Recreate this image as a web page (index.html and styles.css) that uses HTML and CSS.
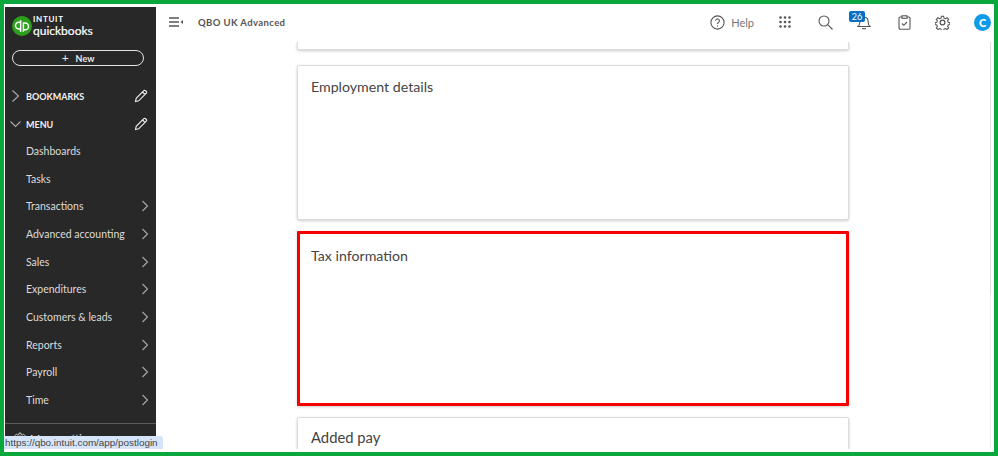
FILE: index.html
```html
<!DOCTYPE html>
<html lang="en">
<head>
<meta charset="utf-8">
<title>QBO UK Advanced</title>
<link rel="stylesheet" href="styles.css">
</head>
<body>
<div class="frame">
  <aside class="sidebar">
    <div class="logo">
      <svg class="logo-mark" width="20" height="20" viewBox="0 0 20 20"><circle cx="10" cy="10" r="10" fill="#2ca01c"/><path d="M8.600 6.200H6.900a3.400 3.400 0 0 0 0 6.800H8.600V4.200M8.600 6.200V16M11.400 15.800V6.200M11.400 7H13.100a3.400 3.400 0 0 1 0 6.800H11.400" fill="none" stroke="#fff" stroke-width="1.500"/></svg>
      <div class="logo-text"><span class="intuit">INTUIT</span><span class="qb">quickbooks</span></div>
    </div>
    <button class="new-btn"><span class="plus">+</span><span>New</span></button>
    <div class="section section-first">
      <svg class="chev" width="11" height="14" viewBox="0 0 11 14"><path d="M2.500 1.500 8.500 7 2.500 12.500"/></svg>
      <span class="section-label">BOOKMARKS</span>
      <svg class="pencil" width="14" height="14" viewBox="0 0 14 14"><path d="M1.500 12.500 2.200 9.300 9.800 1.700a1.200 1.200 0 0 1 1.700 0l.8.8a1.200 1.200 0 0 1 0 1.700L4.700 11.800Z M8.500 3 11 5.500"/></svg>
    </div>
    <div class="section">
      <svg class="chev" width="11" height="8" viewBox="0 0 11 8"><path d="M.5 1.500 5.500 6.500 10.500 1.500"/></svg>
      <span class="section-label">MENU</span>
      <svg class="pencil" width="14" height="14" viewBox="0 0 14 14"><path d="M1.500 12.500 2.200 9.300 9.800 1.700a1.200 1.200 0 0 1 1.700 0l.8.8a1.200 1.200 0 0 1 0 1.700L4.700 11.800Z M8.500 3 11 5.500"/></svg>
    </div>
    <nav class="menu">
      <div class="item"><span>Dashboards</span></div>
      <div class="item"><span>Tasks</span></div>
      <div class="item"><span>Transactions</span><svg class="chev" width="8" height="12" viewBox="0 0 8 12"><path d="M1.500 1 6.500 6 1.500 11"/></svg></div>
      <div class="item"><span>Advanced accounting</span><svg class="chev" width="8" height="12" viewBox="0 0 8 12"><path d="M1.500 1 6.500 6 1.500 11"/></svg></div>
      <div class="item"><span>Sales</span><svg class="chev" width="8" height="12" viewBox="0 0 8 12"><path d="M1.500 1 6.500 6 1.500 11"/></svg></div>
      <div class="item"><span>Expenditures</span><svg class="chev" width="8" height="12" viewBox="0 0 8 12"><path d="M1.500 1 6.500 6 1.500 11"/></svg></div>
      <div class="item"><span>Customers &amp; leads</span><svg class="chev" width="8" height="12" viewBox="0 0 8 12"><path d="M1.500 1 6.500 6 1.500 11"/></svg></div>
      <div class="item"><span>Reports</span><svg class="chev" width="8" height="12" viewBox="0 0 8 12"><path d="M1.500 1 6.500 6 1.500 11"/></svg></div>
      <div class="item"><span>Payroll</span><svg class="chev" width="8" height="12" viewBox="0 0 8 12"><path d="M1.500 1 6.500 6 1.500 11"/></svg></div>
      <div class="item"><span>Time</span><svg class="chev" width="8" height="12" viewBox="0 0 8 12"><path d="M1.500 1 6.500 6 1.500 11"/></svg></div>
    </nav>
    <div class="side-foot">
      <svg class="foot-gear" width="12" height="12" viewBox="0 0 24 24"><path d="M12 8a4 4 0 1 0 0 8 4 4 0 0 0 0-8Z"/><path d="M10 1h4l.7 3.300 2.500 1 2.900-1.800 2.800 2.800-1.800 2.900 1 2.500 3 .7v3.200l-3 .7-1 2.500 1.800 2.900-2.800 2.800-2.900-1.800-2.500 1-.7 3h-4l-.7-3-2.500-1-2.900 1.800-2.800-2.800 1.800-2.900-1-2.500-3-.7v-3.200l3-.7 1-2.500-1.800-2.900 2.800-2.800 2.900 1.800 2.500-1Z" transform="translate(1.200 1.200) scale(.9)"/></svg>
      <span>Menu settings</span>
    </div>
  </aside>
  <main class="main">
    <header class="topbar">
      <svg class="menu-toggle" width="14" height="10" viewBox="0 0 14 10"><path d="M0 1H10M0 5H10M0 9H10" stroke="#555" stroke-width="1.300" fill="none"/><path d="M14 3 11.500 5 14 7Z" fill="#555"/></svg>
      <span class="company">QBO UK Advanced</span>
      <div class="tools">
        <div class="help">
          <svg class="tool" width="15" height="15" viewBox="0 0 15 15"><circle cx="7.500" cy="7.500" r="6.600"/><path d="M5.600 5.800a1.900 1.900 0 1 1 2.900 1.600c-.7.400-1 .8-1 1.500"/><path d="M7.500 10.400v1.100"/></svg>
          <span>Help</span>
        </div>
        <svg class="grid-icon" width="12" height="12" viewBox="0 0 12 12" fill="#555"><circle cx="1.500" cy="1.500" r="1.300"/><circle cx="6" cy="1.500" r="1.300"/><circle cx="10.500" cy="1.500" r="1.300"/><circle cx="1.500" cy="6" r="1.300"/><circle cx="6" cy="6" r="1.300"/><circle cx="10.500" cy="6" r="1.300"/><circle cx="1.500" cy="10.500" r="1.300"/><circle cx="6" cy="10.500" r="1.300"/><circle cx="10.500" cy="10.500" r="1.300"/></svg>
        <svg class="tool search" width="15" height="15" viewBox="0 0 15 15"><circle cx="6" cy="6" r="5"/><path d="M9.700 9.700 14.500 14.500"/></svg>
        <div class="bell">
          <svg class="tool" width="14" height="16" viewBox="0 0 14 16"><path d="M1 12.500c1.500-1 1.800-2.500 1.800-4.500 0-2.800 1.700-4.800 4.200-4.800s4.200 2 4.200 4.800c0 2 .3 3.500 1.800 4.500Z"/><path d="M5 14.700h4"/></svg>
          <span class="badge">26</span>
        </div>
        <svg class="tool clip" width="13" height="15" viewBox="0 0 13 15"><rect x="1" y="2" width="11" height="12.300" rx="1.200"/><rect x="4" y=".8" width="5" height="2.500" fill="#fff"/><path d="M4 8.500 5.800 10.300 9 7"/></svg>
        <svg class="tool gear" width="15" height="15" viewBox="0 0 24 24"><circle cx="12" cy="12" r="3.800"/><path d="M10 1h4l.7 3.300 2.500 1 2.900-1.800 2.800 2.800-1.800 2.900 1 2.500 3 .7v3.200l-3 .7-1 2.500 1.800 2.900-2.800 2.800-2.900-1.800-2.500 1-.7 3h-4l-.7-3-2.500-1-2.900 1.800-2.800-2.800 1.800-2.900-1-2.500-3-.7v-3.200l3-.7 1-2.500-1.800-2.900 2.800-2.800 2.900 1.800 2.500-1Z" transform="translate(1.200 1.200) scale(.9)"/></svg>
        <span class="avatar">C</span>
      </div>
    </header>
    <div class="content">
      <section class="card card-top"></section>
      <section class="card card-emp"><h2>Employment details</h2></section>
      <section class="card card-tax"><h2>Tax information</h2></section>
      <section class="card card-pay"><h2>Added pay</h2><p class="sub">Bonus &amp; commission</p></section>
    </div>
    <div class="scrollbar"><div class="thumb"></div></div>
  </main>
  <div class="status">https://qbo.intuit.com/app/postlogin</div>
</div>
</body>
</html>
```

FILE: styles.css
```css
* { box-sizing: border-box; }
html, body { margin: 0; height: 100%; background: #fff; overflow: hidden; }
body { font-family: "Lato", "Open Sans", sans-serif; }
.frame {
  position: relative;
  width: 998px;
  height: 456px;
  border: 4px solid #0aa83c;
  padding: 3px 0 3px 1px;
  display: flex;
  overflow: hidden;
  background: #fff;
}
.sidebar {
  width: 151px;
  flex: none;
  background: #282828;
  color: #e6e6e6;
  overflow: hidden;
  display: flex;
  flex-direction: column;
  font-size: 11px;
}
.logo { display: flex; align-items: center; gap: 1px; padding: 0 0 0 7px; height: 38px; flex: none; }
.logo-mark { flex: none; }
.logo-text { display: flex; flex-direction: column; color: #fff; }
.intuit { font-size: 8px; font-weight: 700; letter-spacing: .7px; line-height: 9px; }
.qb { font-size: 12px; font-weight: 400; -webkit-text-stroke: .2px #fff; line-height: 13px; }
.new-btn {
  margin: 5px 0 0 7px;
  width: 132px;
  height: 16px;
  flex: none;
  border: 1px solid #e4e4e4;
  border-radius: 8px;
  background: transparent;
  color: #e8e8e8;
  font: 700 9px "Lato", sans-serif;
  display: flex;
  align-items: center;
  justify-content: center;
  gap: 7px;
  padding: 0;
}
.plus { font-size: 12px; font-weight: 400; line-height: 12px; }
.section { display: flex; align-items: center; height: 28px; padding-right: 8px; position: relative; flex: none; }
.section-first { margin-top: 16px; }
.section-label { position: absolute; left: 21px; font-size: 9px; font-weight: 700; color: #f0f0f0; }
.section .chev { margin-left: 5px; }
.pencil { margin-left: auto; fill: none; stroke: #f0f0f0; stroke-width: 1.100; }
.chev { fill: none; stroke: #aaa; stroke-width: 1.100; flex: none; }
.menu { display: flex; flex-direction: column; flex: none; margin-top: -1px; }
.item { height: 27.700px; display: flex; align-items: center; justify-content: space-between; padding: 0 7px 0 21px; font-size: 10.500px; color: #dcdcdc; white-space: nowrap; }
.side-foot {
  margin-top: 9px;
  flex: none;
  border-top: 1px solid #5c5c5c;
  padding: 8px 0 0 9px;
  display: flex;
  align-items: center;
  gap: 4px;
  font-size: 11px;
}
.foot-gear { flex: none; fill: none; stroke: #ddd; stroke-width: 2; }
.main { flex: 1; min-width: 0; position: relative; display: flex; flex-direction: column; overflow: hidden; }
.topbar { height: 35px; flex: none; display: flex; align-items: center; padding: 0 0 5px 13px; position: relative; z-index: 1; background: #fff; }
.company { margin-left: 15px; font-size: 9.500px; font-weight: 700; color: #555; letter-spacing: .4px; }
.tools { margin-left: auto; display: flex; align-items: center; }
.tool { fill: none; stroke: #555; stroke-width: 1.100; flex: none; }
.help { display: flex; align-items: center; gap: 6px; font-size: 11px; color: #777; }
.grid-icon { margin-left: 25px; flex: none; }
.search { margin-left: 27px; }
.bell { position: relative; margin-left: 24px; width: 14px; height: 16px; }
.bell .tool { display: block; }
.badge {
  position: absolute;
  left: -8px;
  top: -3px;
  width: 16px;
  height: 11px;
  border-radius: 2px;
  background: #0a6fc2;
  color: #fff;
  font-size: 9px;
  line-height: 11px;
  text-align: center;
}
.clip { margin-left: 27px; }
.gear { margin-left: 24px; stroke-width: 1.900; }
.avatar {
  margin-left: 24px;
  margin-right: 3px;
  width: 17px;
  height: 17px;
  border-radius: 50%;
  background: #0f9be8;
  color: #fff;
  font-size: 11px;
  font-weight: 900;
  line-height: 17px;
  text-align: center;
}
.content { padding: 0 0 0 141px; display: flex; flex-direction: column; gap: 11px; }
.card {
  width: 552px;
  flex: none;
  background: #fff;
  border: 1px solid #dcdcdf;
  border-radius: 2px;
  box-shadow: 0 1px 3px rgba(0,0,0,.2);
  padding: 12px 13px;
}
h2 { margin: 0; font-size: 14.200px; font-weight: 400; color: #444; line-height: 18px; }
.card-top { height: 8px; padding: 0; margin-bottom: 4px; border-top: 0; border-radius: 0 0 2px 2px; }
.card-emp { height: 155px; }
.card-tax { height: 175px; border: 3px solid #f60000; border-radius: 1px; padding: 13px 11px; }
.card-pay { height: 50px; padding-top: 10px; }
.card-pay h2 { font-size: 14.800px; }
.sub { margin: 0; font-size: 10px; line-height: 14px; color: #555; }
.scrollbar { position: absolute; right: 3px; top: 35px; bottom: 0; width: 1px; background: #f0f0f2; }
.thumb { height: 253px; background: #dedee0; }
.status {
  position: absolute;
  left: 0;
  bottom: 3px;
  width: 159px;
  height: 13px;
  background: #d6e4fa;
  border-top-right-radius: 3px;
  color: #444;
  font: 9.900px/14px "Liberation Sans", sans-serif;
  padding-left: 1px;
  z-index: 2;
}
```
